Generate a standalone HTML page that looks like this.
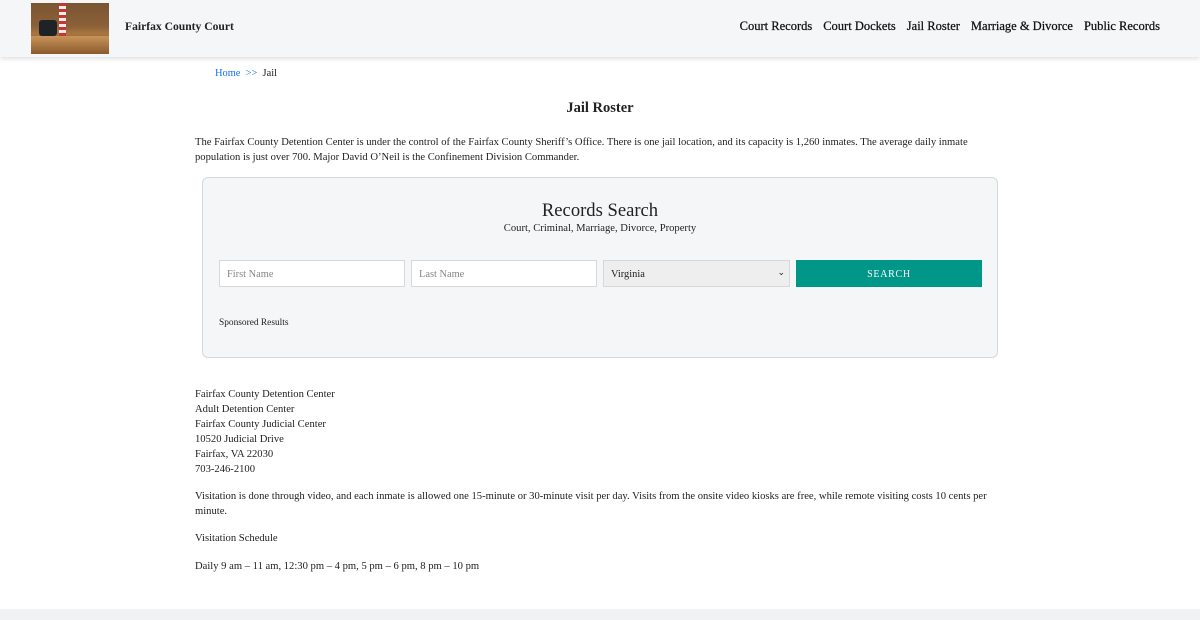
<!DOCTYPE html>
<html><head><meta charset="utf-8"><style>
*{box-sizing:border-box;margin:0;padding:0}
body{width:1200px;height:620px;overflow:hidden;background:#fff;font-family:"Liberation Serif",serif;color:#222;position:relative}
.hdr{position:absolute;left:0;top:0;width:1200px;height:57px;background:#f4f6f7;box-shadow:0 2px 4px rgba(0,0,0,.12)}
.logo{position:absolute;left:31px;top:3px;width:78px;height:51px;background:linear-gradient(180deg,#7a5532 0%,#8b6038 45%,#a8773f 60%,#6e4524 100%)}
.logo .flag{position:absolute;left:28px;top:0;width:7px;height:34px;background:repeating-linear-gradient(180deg,#c33 0 3px,#eee 3px 6px)}
.logo .chair{position:absolute;left:8px;top:17px;width:18px;height:16px;background:#1d2326;border-radius:3px}
.logo .desk{position:absolute;left:0;top:33px;width:78px;height:18px;background:linear-gradient(180deg,#c89458,#8a5a2e)}
.title{position:absolute;left:125px;top:20px;font-size:11.6px;font-weight:bold;color:#222}
.nav{position:absolute;right:40px;top:19px;font-size:12.5px;color:#111;-webkit-text-stroke:.25px #111}
.nav span{margin-left:11px}
.bc{position:absolute;left:215px;top:68px;font-size:10.4px}
.bc a{color:#1a73e8;text-decoration:none}
h1{position:absolute;left:0;width:1200px;top:100px;text-align:center;font-size:14.5px;font-weight:bold}
p{position:absolute;left:195px;width:810px;font-size:10.6px;line-height:15px}
.box{position:absolute;left:202px;top:177px;width:796px;height:181px;background:#f4f6f7;border:1px solid #d6d9db;border-radius:6px}
.box h2{position:absolute;top:22px;width:100%;text-align:center;font-size:18.6px;font-weight:normal}
.box .sub{position:absolute;top:45px;width:100%;text-align:center;font-size:10.6px}
.in{position:absolute;top:82px;height:27px;background:#fff;border:1px solid #d6d9db;font-size:10.4px;color:#888;padding:8px 7px}
.sel{background:#eee;color:#222}
.btn{position:absolute;left:593px;top:82px;width:186px;height:27px;background:#009688;color:#fff;font-size:10px;text-align:center;line-height:29px;letter-spacing:.7px}
.sp{position:absolute;left:16px;top:140px;font-size:9.4px}
.foot{position:absolute;left:0;top:609px;width:1200px;height:11px;background:#f0f2f3}
</style></head><body>
<div class="hdr"><div class="logo"><div class="flag"></div><div class="chair"></div><div class="desk"></div></div>
<div class="title">Fairfax County Court</div>
<div class="nav"><span>Court Records</span><span>Court Dockets</span><span>Jail Roster</span><span>Marriage &amp; Divorce</span><span>Public Records</span></div></div>
<div class="bc"><a>Home</a> <a>&nbsp;&gt;&gt;</a> &nbsp;Jail</div>
<h1>Jail Roster</h1>
<p style="top:135px">The Fairfax County Detention Center is under the control of the Fairfax County Sheriff’s Office. There is one jail location, and its capacity is 1,260 inmates. The average daily inmate population is just over 700. Major David O’Neil is the Confinement Division Commander.</p>
<div class="box"><h2>Records Search</h2><div class="sub">Court, Criminal, Marriage, Divorce, Property</div>
<div class="in" style="left:16px;width:186px">First Name</div>
<div class="in" style="left:208px;width:186px">Last Name</div>
<div class="in sel" style="left:400px;width:187px">Virginia<span style="position:absolute;right:4px;top:6px;font-size:9px">⌄</span></div>
<div class="btn">SEARCH</div>
<div class="sp">Sponsored Results</div></div>
<p style="top:387px">Fairfax County Detention Center<br>Adult Detention Center<br>Fairfax County Judicial Center<br>10520 Judicial Drive<br>Fairfax, VA 22030<br>703-246-2100</p>
<p style="top:489px">Visitation is done through video, and each inmate is allowed one 15-minute or 30-minute visit per day. Visits from the onsite video kiosks are free, while remote visiting costs 10 cents per minute.</p>
<p style="top:531px">Visitation Schedule</p>
<p style="top:559px">Daily 9 am – 11 am, 12:30 pm – 4 pm, 5 pm – 6 pm, 8 pm – 10 pm</p>
<div class="foot"></div>
</body></html>
